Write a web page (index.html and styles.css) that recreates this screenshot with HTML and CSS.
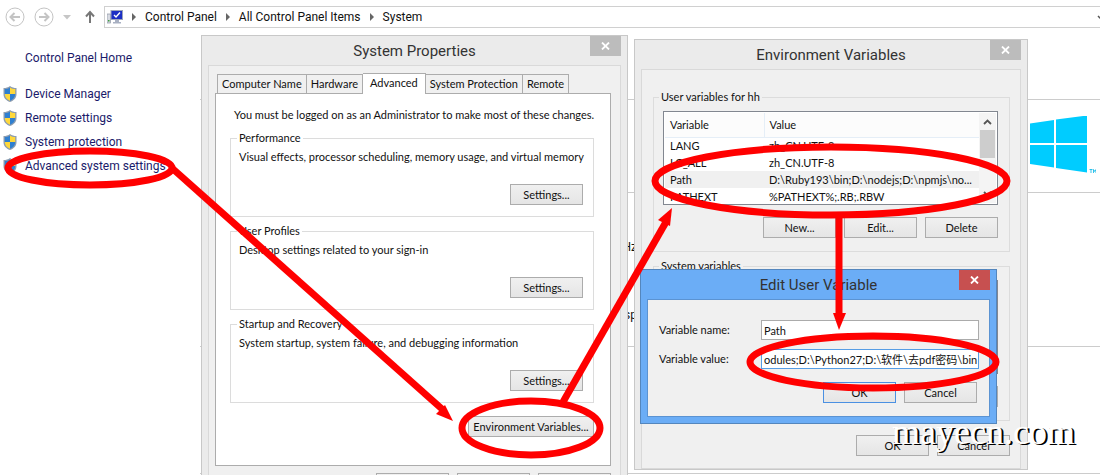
FILE: index.html
```html
<!DOCTYPE html>
<html lang="en">
<head>
<meta charset="utf-8">
<title>System</title>
<link rel="stylesheet" href="styles.css">
</head>
<body>
<div class="desktop">
  <header class="topbar">
    <nav class="history" aria-label="History">
      <button class="icon-btn" aria-label="Back"><svg width="20" height="20" viewBox="0 0 20 20" fill="none" stroke="#c4c4c4"><circle cx="10" cy="10" r="9"/><path d="M15 10H6M9.500 6L5.500 10L9.500 14" stroke-width="2"/></svg></button>
      <button class="icon-btn" aria-label="Forward"><svg width="20" height="20" viewBox="0 0 20 20" fill="none" stroke="#c4c4c4"><circle cx="10" cy="10" r="9"/><path d="M5 10H14M10.500 6L14.500 10L10.500 14" stroke-width="2"/></svg></button>
      <button class="icon-btn recent" aria-label="Recent"><svg width="8" height="5" viewBox="0 0 8 5"><path d="M0 0H8L4 4.500Z" fill="#c6c6c6"/></svg></button>
      <button class="icon-btn" aria-label="Up"><svg width="12" height="14" viewBox="0 0 12 14" fill="none" stroke="#777"><path d="M6 13V2M2 6.500L6 2L10 6.500" stroke-width="2"/></svg></button>
    </nav>
    <nav class="address" aria-label="Address">
      <svg class="pc" width="16" height="14" viewBox="0 0 16 14"><rect x="0" y="4" width="3.500" height="9" fill="#d8dbe2" stroke="#8d94a3" stroke-width=".7"/><rect x="1" y="10" width="1.500" height="1.500" fill="#3c9c3c"/><rect x="4" y=".5" width="11.500" height="9" fill="#1b2fc4" stroke="#9aa3bb"/><path d="M7 5L9 7L13 2.500" stroke="#fff" stroke-width="1.400" fill="none"/><path d="M8 10H12V12H14V13.500H6V12H8Z" fill="#a8b0c2"/></svg>
      <span class="sep"></span><a href="#">Control Panel</a>
      <span class="sep"></span><a href="#">All Control Panel Items</a>
      <span class="sep"></span><a href="#">System</a>
      <svg class="drop" width="7" height="5" viewBox="0 0 7 5"><path d="M1 1L3.500 3.500L6 1" stroke="#555" stroke-width="1.500" fill="none"/></svg>
    </nav>
  </header>
  <div class="page">
    <aside class="side">
      <a class="home" href="#">Control Panel Home</a>
      <a class="task" href="#"><svg class="shield" viewBox="0 0 14 16"><use href="#shield"/></svg>Device Manager</a>
      <a class="task" href="#"><svg class="shield" viewBox="0 0 14 16"><use href="#shield"/></svg>Remote settings</a>
      <a class="task" href="#"><svg class="shield" viewBox="0 0 14 16"><use href="#shield"/></svg>System protection</a>
      <a class="task" href="#"><svg class="shield" viewBox="0 0 14 16"><use href="#shield"/></svg>Advanced system settings</a>
    </aside>
    <main class="info">
      <section class="edition">
        <svg width="66" height="60" viewBox="0 0 66 60" fill="#00ccff" role="img" aria-label="Windows"><path d="M0 7.500L24 4V27H0ZM26 3.500L57 -0.500V27H26ZM0 29H24V51.500L0 48ZM26 29H57V56.500L26 52Z"/><path d="M59.500 53.500H62.500M61 53.500V57M63.500 57V53.500L64.700 55.500L66 53.500V57" fill="none" stroke="#00b4e6" stroke-width=".8"/></svg>
      </section>
      <section class="specs"><span>Hz</span><span>sp</span></section>
      <section class="domain"></section>
      <section class="activation"></section>
    </main>
  </div>

  <section class="window props">
    <div class="titlebar"><h2>System Properties</h2><button class="close" aria-label="Close"><svg width="9" height="8" viewBox="0 0 9 8"><path d="M1 .5L8 7.500M8 .5L1 7.500" stroke="#fff" stroke-width="1.800"/></svg></button></div>
    <div class="client">
      <div class="tabs"><button>Computer Name</button><button>Hardware</button><button class="active">Advanced</button><button>System Protection</button><button>Remote</button></div>
      <div class="panel">
        <p class="note">You must be logged on as an Administrator to make most of these changes.</p>
        <fieldset><legend>Performance</legend><p>Visual effects, processor scheduling, memory usage, and virtual memory</p><button class="btn">Settings...</button></fieldset>
        <fieldset><legend>User Profiles</legend><p>Desktop settings related to your sign-in</p><button class="btn">Settings...</button></fieldset>
        <fieldset><legend>Startup and Recovery</legend><p>System startup, system failure, and debugging information</p><button class="btn">Settings...</button></fieldset>
        <button class="btn env-btn">Environment Variables...</button>
      </div>
      <div class="actions"><button class="btn" aria-label="OK"></button><button class="btn" aria-label="Cancel"></button><button class="btn" aria-label="Apply" disabled></button></div>
    </div>
  </section>

  <section class="window env">
    <div class="titlebar"><h2>Environment Variables</h2><button class="close" aria-label="Close"><svg width="9" height="8" viewBox="0 0 9 8"><path d="M1 .5L8 7.500M8 .5L1 7.500" stroke="#fff" stroke-width="1.800"/></svg></button></div>
    <div class="client">
      <fieldset><legend>User variables for hh</legend>
        <div class="list">
          <table>
            <thead><tr><th>Variable</th><th>Value</th></tr></thead>
            <tbody>
              <tr><td>LANG</td><td>zh_CN.UTF-8</td></tr>
              <tr><td>LC_ALL</td><td>zh_CN.UTF-8</td></tr>
              <tr class="selected"><td>Path</td><td>D:\Ruby193\bin;D:\nodejs;D:\npmjs\no...</td></tr>
              <tr><td>PATHEXT</td><td>%PATHEXT%;.RB;.RBW</td></tr>
            </tbody>
          </table>
          <div class="scroll"><svg width="9" height="6" viewBox="0 0 9 6"><path d="M1 5L4.500 1.500L8 5" fill="none" stroke="#555" stroke-width="1.800"/></svg><i></i><svg width="9" height="6" viewBox="0 0 9 6"><path d="M1 1L4.500 4.500L8 1" fill="none" stroke="#555" stroke-width="1.800"/></svg></div>
        </div>
        <div class="row"><button class="btn">New...</button><button class="btn">Edit...</button><button class="btn">Delete</button></div>
      </fieldset>
      <fieldset><legend>System variables</legend>
        <div class="list"></div>
        <div class="row"><button class="btn" aria-label="New"></button><button class="btn" aria-label="Edit"></button><button class="btn" aria-label="Delete"></button></div>
      </fieldset>
      <div class="row confirm"><button class="btn">OK</button><button class="btn">Cancel</button></div>
    </div>
  </section>

  <section class="window edit">
    <div class="titlebar"><h2>Edit User Variable</h2><button class="close" aria-label="Close"><svg width="9" height="8" viewBox="0 0 9 8"><path d="M1 .5L8 7.500M8 .5L1 7.500" stroke="#fff" stroke-width="1.800"/></svg></button></div>
    <form class="client">
      <label for="vname">Variable name:</label><input id="vname" type="text" value="Path">
      <label for="vvalue">Variable value:</label><input id="vvalue" class="focus" type="text" value="odules;D:\Python27;D:\软件\去pdf密码\bin">
      <div class="row"><button type="button" class="btn default">OK</button><button type="button" class="btn">Cancel</button></div>
    </form>
  </section>

  <svg class="marks" width="1100" height="475" viewBox="0 0 1100 475" fill="none" stroke="#f00" stroke-width="7">
    <defs><g id="shield" stroke="none"><path d="M7 0C5 1.500 3 2 .5 2V8C.5 12 3 14.500 7 16C11 14.500 13.500 12 13.500 8V2C11 2 9 1.500 7 0Z" fill="#8d9db0"/><path d="M7 1.500C5.500 2.500 4 3 1.800 3V8H7Z" fill="#2f7fd0"/><path d="M7 1.500C8.500 2.500 10 3 12.200 3V8H7Z" fill="#ffd83a"/><path d="M7 14.700C3.500 13.200 1.800 11 1.800 8H7Z" fill="#ffd83a"/><path d="M7 14.700C10.500 13.200 12.200 11 12.200 8H7Z" fill="#2f7fd0"/></g></defs>
    <ellipse cx="90" cy="168" rx="82" ry="17"/>
    <path d="M173 169L442 409"/><path d="M453 421L445 405L436 414Z" fill="#f00" stroke="none"/>
    <ellipse cx="531" cy="428" rx="69" ry="27"/>
    <path d="M563 402L666 222"/><path d="M672 208L658 220L670 226Z" fill="#f00" stroke="none"/>
    <ellipse cx="831" cy="181" rx="176" ry="34"/>
    <path d="M839 215V317"/><path d="M839 330L833 313H846Z" fill="#f00" stroke="none"/>
    <ellipse cx="873" cy="362" rx="123" ry="26"/>
  </svg>
  <div class="watermark">mayecn.com</div>
</div>
</body>
</html>
```
FILE: styles.css
```css
* { box-sizing: border-box; }
body { margin: 0; background: #fff; color: #111; font: 12px/16px Roboto, sans-serif; }
p, h2, fieldset { margin: 0; }
button, input { font: inherit; color: inherit; margin: 0; }
a { color: inherit; text-decoration: none; }
.desktop { position: relative; height: 100vh; overflow: hidden; }

.topbar { display: flex; padding-top: 6px; }
.history { display: flex; align-items: center; width: 104px; padding-left: 5px; gap: 9px; }
.icon-btn { display: flex; border: 0; padding: 0; background: none; }
.icon-btn.recent { margin-right: 4px; }
.address { flex: 1; display: flex; align-items: center; height: 22px; border: 1px solid #d0d0d0; border-right: 0; padding-left: 2px; overflow: hidden; }
.sep { margin: 0 9px; border: 4px solid transparent; border-left-color: #666; border-right: 0; }
.drop { margin-left: auto; margin-right: -4px; }

.page { display: flex; }
.side { display: flex; flex-direction: column; gap: 8px; width: 200px; padding: 22px 0 0 3px; color: #1a1a6a; }
.home { margin: 0 0 12px 22px; }
.task { display: flex; align-items: center; gap: 8px; }
.shield { width: 14px; height: 16px; }
.info { flex: 1; padding-top: 71px; }
.info section { border-top: 1px solid #ccc; }
.edition { height: 93px; padding: 16px 0 0 830px; }
.specs { display: grid; grid-template-columns: 437px; justify-items: end; align-content: start; gap: 52px; height: 154px; padding-top: 46px; }
.domain { height: 127px; }

.window { position: absolute; border: 1px solid #c8c8c8; padding: 0 6px; background: #ebebeb; }
.titlebar { position: relative; display: flex; justify-content: center; height: 29px; }
.titlebar h2 { font: 15px/30px Roboto, sans-serif; color: #333; }
.close { position: absolute; top: 0; right: 0; display: flex; align-items: center; justify-content: center; width: 31px; height: 20px; border: 0; padding: 0; background: #bcbcbc; }
.client { border: 1px solid #d9d9d9; background: #f0f0f0; }
.btn { width: 73px; height: 21px; border: 1px solid #acacac; padding: 0; background: linear-gradient(#f0f0f0, #e5e5e5); line-height: 19px; white-space: nowrap; }
fieldset { min-width: 0; border: 1px solid #dcdcdc; padding: 0; }
legend { padding: 0 2px; }
.row { display: flex; justify-content: flex-end; gap: 8px; }

.props { left: 201px; top: 35px; width: 427px; font: 11px/14px Lato, sans-serif; }
.props .client { padding: 7px 9px 0 6px; }
.tabs { display: flex; align-items: flex-end; padding-left: 2px; }
.tabs button { height: 19px; border: 1px solid #acacac; border-bottom: 0; border-left-width: 0; padding: 0 4px; background: #f0f0f0; white-space: nowrap; }
.tabs button:first-child { border-left-width: 1px; }
.tabs .active { height: 21px; padding: 0 7px 2px; background: #fff; margin-bottom: -1px; }
.panel { display: flex; flex-direction: column; height: 373px; border: 1px solid #acacac; padding: 14px 16px 0 14px; background: #fff; }
.note { padding: 0 0 9px 4px; white-space: nowrap; }
.panel fieldset { display: flex; flex-direction: column; height: 86px; margin-bottom: 7px; padding: 5px 10px 0 8px; }
.panel legend { margin-left: -2px; }
.panel fieldset p { white-space: nowrap; }
.panel fieldset .btn { align-self: flex-end; margin-top: 20px; }
.env-btn { align-self: flex-end; width: 126px; margin-top: 6px; }
.actions { display: flex; justify-content: flex-end; gap: 8px; padding-top: 7px; }

.env { left: 634px; top: 39px; width: 394px; font: 11px/16px Lato, sans-serif; }
.env .client { height: 400px; padding: 19px 10px 0 11px; }
.env fieldset { height: 163px; margin-bottom: 6px; padding: 6px 11px 0 9px; }
.env legend { margin-left: -4px; }
.list { display: flex; height: 94px; border: 1px solid #828790; background: #fff; overflow: hidden; padding: 1px; }
.list table { flex: 1; border-collapse: collapse; table-layout: fixed; }
.list th { height: 24px; border-bottom: 1px solid #e5eef7; text-align: left; font-weight: normal; padding: 0 5px; background: #fcfcfc; }
.list th:first-child { width: 99px; border-right: 1px solid #e5eef7; }
.list td { height: 17px; padding: 0 5px; white-space: nowrap; }
.selected { background: #f0f0f0; }
.scroll { display: flex; flex-direction: column; align-items: center; width: 17px; padding: 6px 0; background: #f4f4f4; }
.scroll i { width: 15px; height: 28px; margin: 5px 0 auto; background: #cdcdcd; }
.env .row { padding-top: 12px; }
.env .confirm { padding-top: 8px; }

.edit { left: 640px; top: 269px; width: 357px; border-color: #5486bd; padding-bottom: 6px; background: #6badf6; font: 11px/16px Lato, "Noto Sans CJK SC", sans-serif; }
.edit .close { background: #c75050; }
.edit .client { display: grid; grid-template-columns: 102px 1fr; align-items: center; row-gap: 9px; height: 118px; align-content: start; border-color: #5b93d2; padding: 20px 10px 0 11px; }
.edit input { width: 100%; height: 20px; border: 1px solid #ababab; padding: 0 0 0 2px; background: #fff; }
.edit .focus { border-color: #569de5; }
.edit .row { grid-column: 1 / -1; padding: 4px 2px 0 0; }
.edit .default { border-color: #4a90e2; }

.marks { position: absolute; left: 0; top: 0; }
.watermark { position: absolute; left: 892px; top: 411px; color: #fff; font: 36px/42px "Liberation Serif", serif; text-shadow: 2px 1px 0 #000; }
```
